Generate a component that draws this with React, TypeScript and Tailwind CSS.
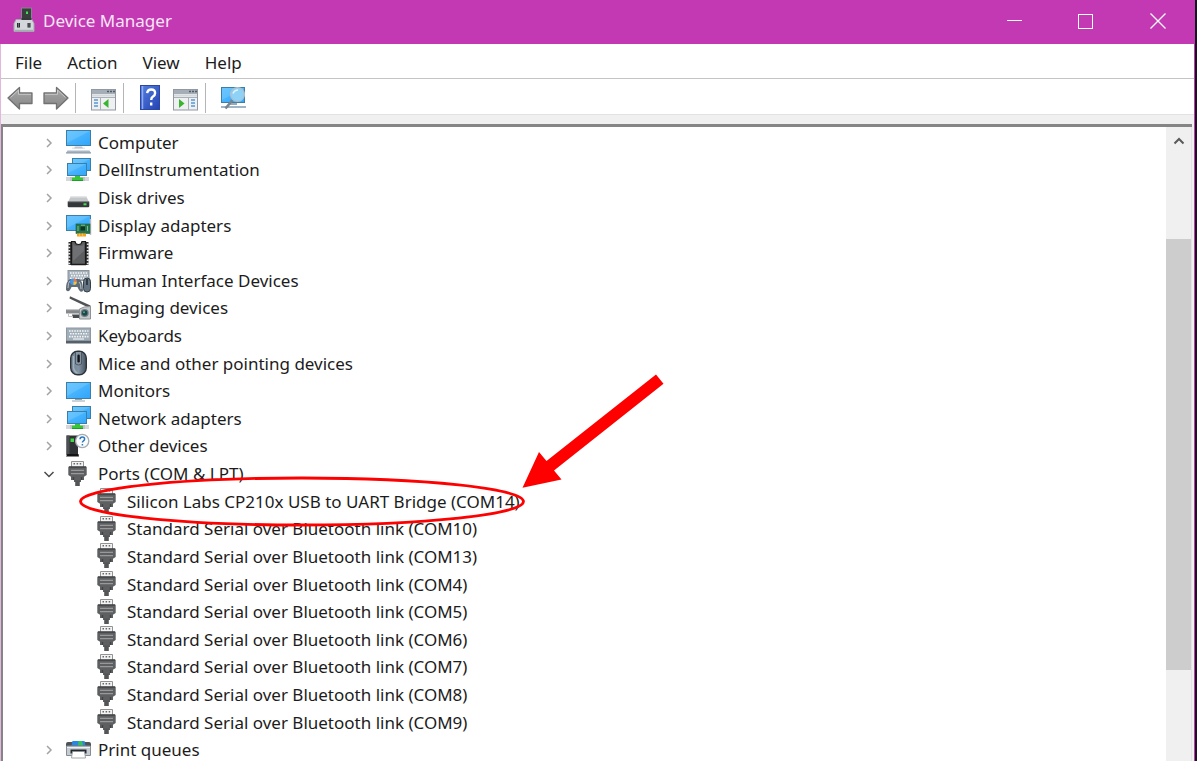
import React from "react";

type IconName =
  | "computer" | "network" | "disk" | "display" | "firmware" | "hid" | "imaging"
  | "keyboard" | "mouse" | "monitor" | "other" | "port" | "printer";

type Device = { label: string; icon: IconName; child?: boolean; open?: boolean };

const devices: Device[] = [
  { label: "Computer", icon: "computer" },
  { label: "DellInstrumentation", icon: "network" },
  { label: "Disk drives", icon: "disk" },
  { label: "Display adapters", icon: "display" },
  { label: "Firmware", icon: "firmware" },
  { label: "Human Interface Devices", icon: "hid" },
  { label: "Imaging devices", icon: "imaging" },
  { label: "Keyboards", icon: "keyboard" },
  { label: "Mice and other pointing devices", icon: "mouse" },
  { label: "Monitors", icon: "monitor" },
  { label: "Network adapters", icon: "network" },
  { label: "Other devices", icon: "other" },
  { label: "Ports (COM & LPT)", icon: "port", open: true },
  { label: "Silicon Labs CP210x USB to UART Bridge (COM14)", icon: "port", child: true },
  { label: "Standard Serial over Bluetooth link (COM10)", icon: "port", child: true },
  { label: "Standard Serial over Bluetooth link (COM13)", icon: "port", child: true },
  { label: "Standard Serial over Bluetooth link (COM4)", icon: "port", child: true },
  { label: "Standard Serial over Bluetooth link (COM5)", icon: "port", child: true },
  { label: "Standard Serial over Bluetooth link (COM6)", icon: "port", child: true },
  { label: "Standard Serial over Bluetooth link (COM7)", icon: "port", child: true },
  { label: "Standard Serial over Bluetooth link (COM8)", icon: "port", child: true },
  { label: "Standard Serial over Bluetooth link (COM9)", icon: "port", child: true },
  { label: "Print queues", icon: "printer" },
];

function Screen({ x, y, w, h }: { x: number; y: number; w: number; h: number }) {
  return (
    <>
      <rect x={x + 0.5} y={y + 0.5} width={w - 1} height={h - 1} fill="url(#screen)" stroke="#3d7ea6" />
      <path d={`M${x + 1} ${y + 1}h${w - 2}L${x + 1} ${y + h - 3}z`} fill="#8ad4ff" opacity="0.35" />
    </>
  );
}

const dots = (x0: number, x1: number, y: number) => (
  <path d={`M${x0} ${y}H${x1}`} stroke="#f4f7f9" strokeWidth="1.6" strokeDasharray="1.6 1" />
);

const drawings: Record<IconName, React.ReactNode> = {
  computer: (
    <>
      <Screen x={0} y={0} w={25} h={16} />
      <path d="M9 16.5h7l1 2H8z" fill="#b4c0ca" />
      <path d="M6 18.2h13" stroke="#d5dce2" />
      <path d="M1.5 20.5h22l1.5 2.5H0z" fill="#a9b6c3" />
      <path d="M0 23h25" stroke="#8796a5" />
    </>
  ),
  network: (
    <>
      <Screen x={6} y={0} w={19} h={13} />
      <Screen x={1} y={5} w={20} h={13} />
      <rect x="0" y="19" width="23" height="4" fill="#d5d8da" />
      <path d="M5 19v4M18 19v4" stroke="#a9adb0" />
      <path d="M9 18h5v1.5h3V23H6v-3.500h3z" fill="#37c637" />
      <path d="M6 22.500h11" stroke="#1f9d2c" />
    </>
  ),
  disk: (
    <>
      <path d="M5 10h15l3 6H2z" fill="#c4c7c9" />
      <path d="M5 10h15l.8 1.600H4.200z" fill="#e3e5e6" />
      <path d="M1.700 15.500h21.600V20q0 1.200-1.200 1.200H2.900Q1.700 21.200 1.700 20z" fill="#34383a" />
      <path d="M2 15.700h21" stroke="#85898b" />
      <rect x="17.500" y="17.300" width="3" height="2" fill="#45e052" />
    </>
  ),
  display: (
    <>
      <Screen x={0} y={2} w={25} h={16} />
      <path d="M24.500 6v16" stroke="#b9bec1" strokeWidth="1.500" />
      <rect x="10" y="11" width="14" height="9.500" fill="#25764e" stroke="#1c5c3d" strokeWidth=".6" />
      <rect x="14.500" y="13.500" width="4.500" height="4" fill="#12331f" />
      <path d="M12 13v5M21.500 13v5M15 12.200h4" stroke="#78c08f" />
      <path d="M11 22h9" stroke="#f0a51e" strokeWidth="3" />
      <path d="M13.500 20.500v3M16.500 20.500v3" stroke="#ffd566" strokeWidth=".6" />
    </>
  ),
  firmware: (
    <>
      <path d="M4 1v23M21 1v23" stroke="#2a2a2a" strokeWidth="3" />
      <path d="M3.200 2.500v21M21.800 2.500v21" stroke="#e6e6e6" strokeWidth="2" strokeDasharray="1.500 1.700" />
      <path d="M5.500.5H9q.5 3 3.500 3t3.500-3h3.500v23h-14z" fill="#5c5e60" stroke="#171717" strokeWidth="1.200" />
      <path d="M7 3l2 2h7l2-2v7L7 20z" fill="#85888b" opacity=".45" />
      <path d="M5 23.500h15" stroke="#1b1b1b" strokeWidth="1.500" />
    </>
  ),
  hid: (
    <>
      <rect x="2" y="2.500" width="21" height="10" fill="#a5b0b9" stroke="#8a959e" />
      {dots(4, 22, 5)}
      {dots(5, 22, 7.600)}
      {dots(4, 22, 10.200)}
      <path d="M0 22q-.3-9 4-11h9q4 1.500 4 12-3 2.500-5.500-4h-6Q3 25.500 0 22z" fill="#5f6b75" />
      <path d="M2 20q0-6 2-7M15 21q0-6-2-7" stroke="#b4c1cb" fill="none" />
      <circle cx="7.500" cy="13.800" r="3.300" fill="#3e99ee" />
      <path d="M7.500 13.800V10.500a3.300 3.300 0 0 1 3.300 3.300z" fill="#ef7348" />
      <path d="M7.500 13.800h3.300a3.300 3.300 0 0 1-3.300 3.300z" fill="#f5c33b" />
      <rect x="17.500" y="10" width="7" height="14" rx="3.500" fill="#647482" stroke="#353f48" />
      <path d="M21 11v6" stroke="#20262c" strokeWidth="1.500" />
    </>
  ),
  imaging: (
    <>
      <path d="M4 .3L24.500 9.500v3L3.500 2.500z" fill="#505355" />
      <path d="M0 13.500h13V17.500H0z" fill="#85898c" />
      <path d="M1 13.700h12" stroke="#c6c9cb" />
      <path d="M6 18.500h9V22H7z" fill="#4a4d50" />
      <path d="M2.500 17v3.500H7" fill="none" stroke="#c1c4c6" />
      <path d="M13.500 13q4-2.800 11-2.500v12.500h-11z" fill="#c3c8ca" stroke="#8c9295" />
      <circle cx="18.700" cy="17" r="4" fill="#727a7d" />
      <circle cx="18.700" cy="17" r="2.700" fill="#174a4b" />
      <circle cx="18" cy="16.300" r="1" fill="#53a69d" />
    </>
  ),
  keyboard: (
    <>
      <rect x=".5" y="4" width="24" height="15" fill="#a1adb7" stroke="#8c98a2" />
      <path d="M0 18h25" stroke="#55606a" strokeWidth="2.500" />
      {dots(3, 22.500, 7)}
      {dots(4, 22.500, 9.800)}
      {dots(3, 22.500, 12.600)}
      <path d="M7 15h11" stroke="#eef1f3" strokeWidth="1.200" />
    </>
  ),
  mouse: (
    <>
      <rect x="4.700" y=".2" width="15.600" height="23.600" rx="7" fill="url(#mouseBody)" stroke="#2c333a" strokeWidth="1.400" />
      <path d="M7.500 5v12q1 4 4 5" fill="none" stroke="#b1c0cc" strokeWidth="1.500" opacity=".7" />
      <path d="M9.500 1v12q3 2 6 0V1" fill="#8494a1" stroke="#39444d" strokeWidth=".7" />
      <rect x="11.400" y="3.500" width="2.400" height="8" rx="1.200" fill="#101418" />
    </>
  ),
  monitor: (
    <>
      <Screen x={0} y={3} w={25} h={17} />
      <path d="M9 20h7v1H9z" fill="#90a0ad" />
      <path d="M6 22h13" stroke="#a9b5bf" strokeWidth="1.200" />
    </>
  ),
  other: (
    <>
      <path d="M.5 1.500H12V21H.5z" fill="#303335" />
      <path d="M.5 1.500h3V21h-3z" fill="#4c5053" />
      <path d="M0 22.500l1.500-2.500h11l.500 2.500z" fill="#151515" />
      <rect x="4.500" y="4.500" width="3.500" height="3.500" fill="#3ed943" />
      <circle cx="16.200" cy="7" r="6.600" fill="#fafcfd" stroke="#a4adb3" strokeWidth="1.300" />
      <path d="M14 5.200q.2-2.200 2.300-2.200 2.300 0 2.300 2 0 1.300-1.300 2-.9.600-.9 1.600M16.400 10v1.500" fill="none" stroke="#2b78c2" strokeWidth="1.500" />
    </>
  ),
  port: (
    <>
      <path d="M5.500 5V-.5h12V5" fill="#f3f3f3" stroke="#929292" />
      <path d="M7.500 1.700h9" stroke="#686868" strokeWidth="1.600" strokeDasharray="1.500 1.600" />
      <path d="M3 4.500h17q.7 0 .7.700V13l-2.700 1.800V18h-3v2H8v-2H5v-3.200L2.300 13V5.200q0-.7.700-.7z" fill="#5d5f61" />
      <path d="M3 5h17" stroke="#3a3c3e" strokeWidth="1.200" />
      <path d="M5 8.300h13M5 11.700h13" stroke="#97999b" strokeWidth="1.300" />
      <path d="M7.500 15v3M15.500 15v3" stroke="#404244" strokeWidth="1.300" />
      <path d="M9.200 18.500h4.600V24H9.200z" fill="#535557" />
    </>
  ),
  printer: (
    <>
      <path d="M0 6q0-2 2-2h21q2 0 2 2v2H0z" fill="#4d5255" />
      <path d="M6.500 3h12l1 4.500h-14z" fill="#2887e4" />
      <path d="M12.500 3h3.500l1 4.500h-5z" fill="#34c456" />
      <path d="M.5 8h24v9.500H.5z" fill="#c6cdd2" stroke="#858d93" />
      <path d="M1 9.500h23" stroke="#edf1f3" />
      <path d="M4.500 11.500h16v4h-16z" fill="#24282a" />
      <path d="M6.500 13.500h12l1 6.500h-14z" fill="#fff" stroke="#8c9296" strokeWidth=".8" />
    </>
  ),
};

function DeviceIcon({ name }: { name: IconName }) {
  return (
    <svg viewBox="0 0 25 25" className="size-[25px] shrink-0 overflow-visible" aria-hidden="true">
      {drawings[name]}
    </svg>
  );
}

function Arrow({ flip }: { flip?: boolean }) {
  return (
    <svg viewBox="0 0 26 24" className={flip ? "w-[26px] h-6 -scale-x-100" : "w-[26px] h-6"} aria-hidden="true">
      <path d="M1 12L12.500 1.500V7H25v10.500H12.500V23z" fill="url(#arrowFill)" stroke="#717171" strokeWidth="1.300" strokeLinejoin="round" />
      <path d="M3.500 11.500L11.500 4v4.300H24" fill="none" stroke="#c9c9c9" />
    </svg>
  );
}

function PaneIcon({ flip }: { flip?: boolean }) {
  return (
    <svg viewBox="0 0 25 22" className="w-[25px] h-[22px]" aria-hidden="true">
      <rect x=".5" y=".5" width="24" height="20.500" fill="#eef0f2" stroke="#9299a2" />
      <path d="M1 1h23v4H1z" fill="#a5adb7" />
      <path d="M16 2.500h2M19 2.500h2M22 2.500h2" stroke="#4d5b6a" strokeWidth="1.500" />
      <path d="M1 5.500h23v2H1z" fill="#d6dadd" />
      <path d="M1 8.500h23" stroke="#a9b0b8" />
      {flip ? (
        <>
          <path d="M15.500 8.500V21" stroke="#a9b0b8" />
          <path d="M18 11h4M18 14h4M18 17h4" stroke="#5798d4" strokeWidth="1.500" />
          <path d="M6 10l5.500 4.500L6 19z" fill="#3ab52f" />
        </>
      ) : (
        <>
          <path d="M9.500 8.500V21" stroke="#a9b0b8" />
          <path d="M3 11h4M3 14h4M3 17h4" stroke="#5798d4" strokeWidth="1.500" />
          <path d="M17.500 10L12 14.500l5.500 4.500z" fill="#3ab52f" />
        </>
      )}
    </svg>
  );
}

function Separator() {
  return <span className="h-[30px] w-px bg-[#b5b5b5]" />;
}

export default function App() {
  return (
    <div className="relative flex h-screen bg-white pr-px pb-[5px] font-['Noto_Sans',sans-serif] text-[17px] leading-[26px] text-[#1c1c1c]">
      <svg className="absolute size-0" aria-hidden="true">
        <defs>
          <linearGradient id="screen" x1="0" y1="0" x2="1" y2="1">
            <stop offset="0" stopColor="#5cc0ff" />
            <stop offset="1" stopColor="#2fa5fb" />
          </linearGradient>
          <linearGradient id="mouseBody" x1="0" y1="0" x2="1" y2="0">
            <stop offset="0" stopColor="#6f8190" />
            <stop offset=".5" stopColor="#8294a3" />
            <stop offset="1" stopColor="#46525d" />
          </linearGradient>
          <linearGradient id="arrowFill" x1="0" y1="0" x2="0" y2="1">
            <stop offset="0" stopColor="#a9a9a9" />
            <stop offset="1" stopColor="#858585" />
          </linearGradient>
          <linearGradient id="helpFill" x1="0" y1="0" x2="1" y2="1">
            <stop offset="0" stopColor="#5480e0" />
            <stop offset="1" stopColor="#2442b4" />
          </linearGradient>
        </defs>
      </svg>

      <div className="flex min-w-0 flex-1 flex-col">
        <header className="flex h-11 shrink-0 items-center bg-[#c239b3] pr-px pl-[13px] text-white">
          <svg viewBox="0 0 22 26" className="mb-1 h-[26px] w-[22px]" aria-hidden="true">
            <rect x="8.500" y="1" width="10" height="13" fill="#393d3d" stroke="#81878a" />
            <rect x="13" y="4.500" width="2" height="2.500" fill="#3ce34f" />
            <path d="M3 12.500h16l2 4v8H1v-8z" fill="#d3d6da" stroke="#a1a6ad" />
            <path d="M2 23.500h18" stroke="#a9aeb3" strokeWidth="1.500" />
            <path d="M8.500 11h10v2h-10z" fill="#343838" />
            <path d="M4 16h3v4.500H4zM14.500 16h3v4.500h-3z" fill="#292f32" />
            <path d="M5.500 16v4M16 16v4" stroke="#7d898d" strokeWidth=".7" />
          </svg>
          <h1 className="ml-2 flex-1 pb-[2px] text-[#f8e6f6]">Device Manager</h1>
          <button aria-label="Minimize" className="grid h-11 w-[72px] place-items-center pb-[3px]">
            <span className="h-px w-[15px] bg-white" />
          </button>
          <button aria-label="Maximize" className="grid h-11 w-[71px] place-items-center pb-[2px]">
            <span className="size-[15px] border border-white" />
          </button>
          <button aria-label="Close" className="grid h-11 w-[73px] place-items-center pb-[2px]">
            <svg viewBox="0 0 16 16" className="size-4" aria-hidden="true">
              <path d="M.5.5l15 15M15.500.5l-15 15" stroke="#fff" strokeWidth="1.300" />
            </svg>
          </button>
        </header>

        <div className="flex min-h-0 flex-1 flex-col border-r border-l border-r-[#c239b3] border-l-[#e3b6df]">
          <nav aria-label="Menu" className="flex h-[35px] shrink-0 items-center gap-[25px] border-b border-[#c4c4c4] pt-1 pl-[14px]">
            <button>File</button>
            <button>Action</button>
            <button>View</button>
            <button>Help</button>
          </nav>

          <div role="toolbar" aria-label="Tools" className="flex h-9 shrink-0 items-center border-b border-[#e2e2e2] pt-[3px] pl-[6px]">
            <button aria-label="Back"><Arrow /></button>
            <button aria-label="Forward" className="mr-[6px] ml-[10px]"><Arrow flip /></button>
            <Separator />
            <button aria-label="Show or hide console tree" className="mr-[7px] ml-[15px] pt-[3px]"><PaneIcon /></button>
            <Separator />
            <button aria-label="Help topics" className="mr-[13px] ml-4">
              <svg viewBox="0 0 20 26" className="h-[26px] w-5" aria-hidden="true">
                <rect x=".5" y=".5" width="19" height="24" fill="url(#helpFill)" stroke="#2b46a3" />
                <path d="M2.500 1v23" stroke="#8fabf0" strokeWidth="1.500" />
                <path d="M7.200 8.200q.3-3.700 4-3.700 3.900 0 3.900 3.500 0 2.300-2.100 3.600-1.800 1.100-1.800 3.400M11.200 17.500v3" fill="none" stroke="#fff" strokeWidth="2.400" />
              </svg>
            </button>
            <button aria-label="Show or hide action pane" className="mr-[7px] pt-[3px]"><PaneIcon flip /></button>
            <Separator />
            <button aria-label="Scan for hardware changes" className="ml-[14px]">
              <svg viewBox="0 0 27 26" className="h-[26px] w-[27px]" aria-hidden="true">
                <Screen x={1} y={2} w={24} h={16} />
                <path d="M10 18h7v2h-7z" fill="#9ba9b5" />
                <path d="M1 22h25" stroke="#a1b4c4" strokeWidth="2" />
                <path d="M12.500 15L5.500 23.500" stroke="#788490" strokeWidth="2.600" />
                <circle cx="17.500" cy="9.500" r="6.800" fill="#8fd2f7" stroke="#a8c2d3" strokeWidth="1.600" />
                <path d="M13 8.500q1.500-3.500 5-3.500" stroke="#e1f4fe" strokeWidth="1.500" fill="none" />
              </svg>
            </button>
          </div>

          <div className="flex min-h-0 flex-1 bg-[#f0f0f0] pt-[9px] pr-[2px]">
            <main className="flex min-w-0 flex-1 overflow-hidden border-t-[3px] border-l-2 border-[#858585] bg-white">
              <ul role="tree" aria-label="Devices" className="mt-[2px] grid h-[635px] flex-1 auto-rows-fr">
                {devices.map((d) => (
                  <li
                    key={d.label}
                    role="treeitem"
                    aria-level={d.child ? 2 : 1}
                    aria-expanded={d.child ? undefined : !!d.open}
                    className={d.child ? "flex min-h-0 items-center pl-[92px]" : "flex min-h-0 items-center pl-10"}
                  >
                    {!d.child && (
                      <svg viewBox="0 0 12 12" className="mr-[11px] size-3 shrink-0" fill="none" aria-hidden="true">
                        {d.open ? (
                          <path d="M1.500 4L6 8.500 10.500 4" stroke="#4a4a4a" strokeWidth="1.500" />
                        ) : (
                          <path d="M4 2L8 6 4 10" stroke="#a3a3a3" strokeWidth="1.500" />
                        )}
                      </svg>
                    )}
                    <DeviceIcon name={d.icon} />
                    <span className="ml-[7px] whitespace-nowrap">{d.label}</span>
                  </li>
                ))}
              </ul>
              <div className="flex w-[25px] flex-col bg-[#f0f0f0]">
                <button aria-label="Scroll up" className="grid h-7 place-items-center">
                  <svg viewBox="0 0 12 8" className="h-2 w-3" fill="none" aria-hidden="true">
                    <path d="M1.500 6.500L6 2l4.500 4.500" stroke="#5a5a5a" strokeWidth="2" />
                  </svg>
                </button>
                <div className="flex-[84]" />
                <div className="flex-[431] bg-[#cdcdcd]" />
                <div className="flex-[91]" />
              </div>
              <div className="w-px bg-[#e3e3e3]" />
            </main>
          </div>
        </div>
      </div>

      <div className="w-[2px] bg-[#15151d]" />

      <svg viewBox="0 0 700 560" className="pointer-events-none absolute top-0 left-0 h-[560px] w-[700px]" aria-hidden="true">
        <ellipse cx="302" cy="501.500" rx="221.500" ry="23.500" fill="none" stroke="#f00" strokeWidth="2.800" />
        <path d="M522.500 487.800L539 452l7.500 9L656 374.500l7.500 9.300L554 470.500l7.500 9z" fill="#f00" />
      </svg>
    </div>
  );
}
